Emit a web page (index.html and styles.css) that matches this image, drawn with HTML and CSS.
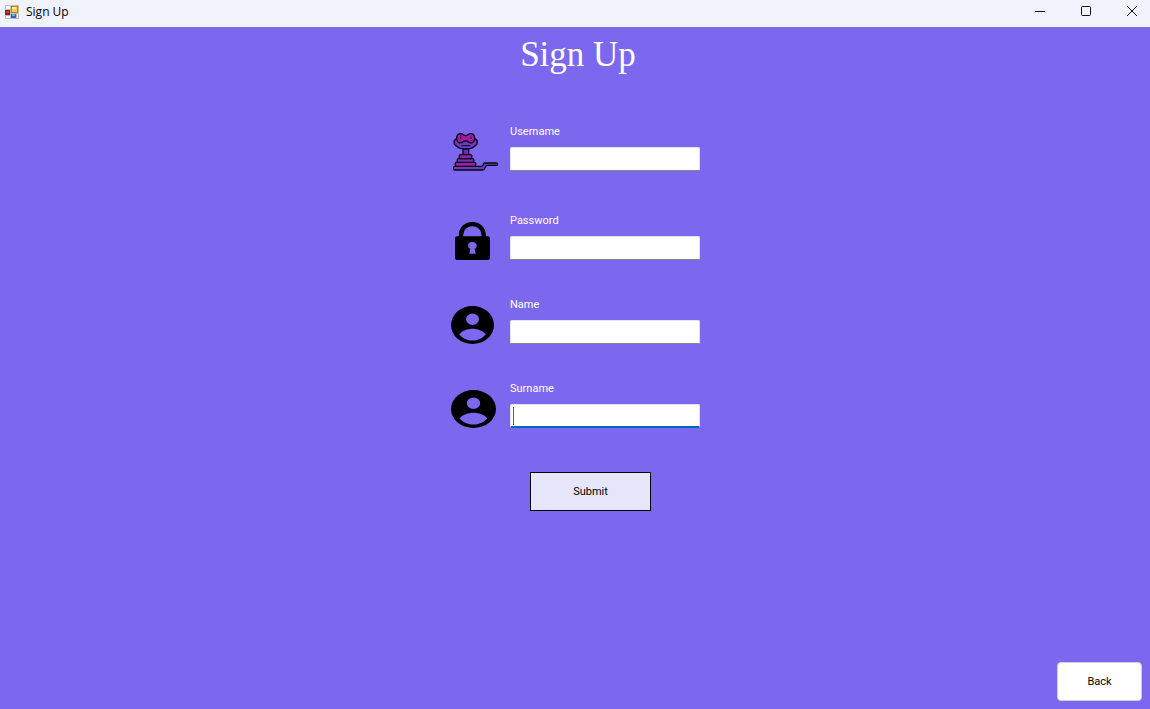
FILE: index.html
```html
<!DOCTYPE html>
<html lang="en">
<head>
<meta charset="utf-8">
<title>Sign Up</title>
<link rel="stylesheet" href="styles.css">
</head>
<body>
<header class="titlebar">
  <svg class="app-icon" viewBox="0 0 14 14" aria-hidden="true">
    <path fill="#bdbdbd" d="M0 0h14v14H0z"/>
    <path fill="#f4f4f4" d="M1 1h4v3H1zM1 11h4v2H1zM12 9h1v4h-1z"/>
    <path fill="#8f1d12" d="M0 5h5v5H0z"/><path fill="#d83a24" d="M1 6h3v2H1z"/>
    <path fill="#b8860b" d="M6 1h7v7H6z"/><path fill="#ffd23c" d="M7 2h5v5H7z"/><path fill="#fff0a0" d="M7 2h4v2H7z"/>
    <path fill="#2b66c4" d="M6 9h5v4H6z"/><path fill="#72aaf0" d="M7 9h3v2H7z"/>
  </svg>
  <span class="window-title">Sign Up</span>
  <div class="window-controls">
    <button type="button" aria-label="Minimize"><svg viewBox="0 0 12 12"><path d="M1 5.500h10"/></svg></button>
    <button type="button" aria-label="Maximize"><svg viewBox="0 0 12 12"><rect x="1.500" y=".5" width="9" height="9" rx="1"/></svg></button>
    <button type="button" aria-label="Close"><svg viewBox="0 0 12 12"><path d="M1 0l10 10M11 0L1 10"/></svg></button>
  </div>
</header>
<main class="page">
  <h1 class="heading">Sign Up</h1>
  <form class="form" id="signup">
    <div class="field">
      <svg class="icon snake" viewBox="24 26 135 114" aria-hidden="true">
        <g stroke="#080510" stroke-width="4" stroke-linejoin="round" stroke-linecap="round">
          <path fill="#5b35b4" d="M54 70h17v22H54z"/>
          <path fill="#6c3cc0" d="M34 44C28 46 26 52 28 58c2 5 6 6 10 10 10 8 38 8 48 0 4-4 8-5 10-10 2-6 0-12-6-14z"/>
          <path fill="#a01ca8" d="M37 33c4-6 13-6 18-2 4 3 10 3 14 0 6-4 14-4 18 2 4 8 2 19-5 22-7 2-12-2-16-5h-8c-4 3-9 7-16 5-7-3-9-14-5-22z"/>
          <path fill="#6c3cc0" d="M29 126h80c7 0 5-10 10-10h36c4 0 4 7 0 7h-29c-6 0-4 14-13 14H29c-5-2-5-9 0-11z"/>
          <path fill="#a01ca8" d="M35 114h53c6 0 6 12 0 12H35c-6 0-6-12 0-12z"/>
          <path fill="#6838ba" d="M40 103h43c5 0 5 11 0 11H40c-5 0-5-11 0-11z"/>
          <path fill="#a01ca8" d="M46 91h31c5 0 5 12 0 12H46c-5 0-5-12 0-12z"/>
        </g>
        <path fill="none" stroke="#080510" stroke-width="3" d="M49 64h27"/>
        <path fill="#3a0b48" d="M45 37h4v7h-4zM76 37h4v7h-4z"/>
      </svg>
      <div class="control"><label for="username">Username</label><input id="username" type="text"></div>
    </div>
    <div class="field">
      <svg class="icon lock" viewBox="0 0 105 114" aria-hidden="true">
        <path fill="none" stroke="#000" stroke-width="13" d="M18 48V40C18 -5 86 -5 86 40v8"/>
        <path fill-rule="evenodd" d="M8 43h90q7 0 7 7v57q0 7-7 7H8q-8 0-8-7V50q0-7 8-7zM52 60c-15 0-17 16-6 21l-3 14h19l-3-14c10-5 8-21-7-21z"/>
      </svg>
      <div class="control"><label for="password">Password</label><input id="password" type="password"></div>
    </div>
    <div class="field">
      <svg class="icon person" viewBox="2 2 20 20" preserveAspectRatio="none" aria-hidden="true"><path d="M12 2a10 10 0 1 0 0 20 10 10 0 0 0 0-20zm0 4a3 3 0 1 1 0 6 3 3 0 0 1 0-6zm0 14.200c-2.500 0-4.700-1.300-6.200-3.200 1.200-1.900 3.900-3 6.200-3s5 1.100 6.200 3c-1.500 1.900-3.700 3.200-6.200 3.200z"/></svg>
      <div class="control"><label for="name">Name</label><input id="name" type="text"></div>
    </div>
    <div class="field">
      <svg class="icon person wide" viewBox="2 2 20 20" preserveAspectRatio="none" aria-hidden="true"><path d="M12 2a10 10 0 1 0 0 20 10 10 0 0 0 0-20zm0 4a3 3 0 1 1 0 6 3 3 0 0 1 0-6zm0 14.200c-2.500 0-4.700-1.300-6.200-3.200 1.200-1.900 3.900-3 6.200-3s5 1.100 6.200 3c-1.500 1.900-3.700 3.200-6.200 3.200z"/></svg>
      <div class="control"><label for="surname">Surname</label><input class="active" id="surname" type="text"></div>
    </div>
    <button class="submit" type="submit">Submit</button>
  </form>
  <button class="back" type="button">Back</button>
</main>
</body>
</html>
```
FILE: styles.css
```css
* { box-sizing: border-box; }
body {
  margin: 0;
  min-height: 100vh;
  display: flex;
  flex-direction: column;
  background: #7b68ee;
  font: 11px/16px Roboto, "Liberation Sans", sans-serif;
}
button, input { font: inherit; }
.titlebar {
  display: flex;
  align-items: center;
  min-height: 27px;
  padding: 0 0 4px 5px;
  background: #f0f3fb;
  color: #000;
}
.app-icon { width: 14px; height: 14px; margin-right: 7px; }
.window-title { font: 12px/16px "Open Sans", sans-serif; }
.window-controls { display: flex; margin-left: auto; }
.window-controls button {
  display: grid;
  place-items: center;
  width: 46px;
  height: 22px;
  padding: 0 0 0 10px;
  border: 0;
  background: none;
}
.window-controls svg {
  width: 12px;
  height: 12px;
  fill: none;
  stroke: #111;
}
.page {
  flex: 1;
  display: flex;
  flex-direction: column;
  align-items: center;
  padding: 8px;
}
.heading {
  margin: 0 0 48px;
  padding-left: 6px;
  color: #fff;
  font: 35px/40px "Liberation Serif", serif;
}
.form {
  display: flex;
  flex-direction: column;
  gap: 36px;
  width: 250px;
  padding-left: 1px;
}
.field {
  display: grid;
  grid-template-columns: 47px 1fr;
  column-gap: 12px;
  align-items: end;
  min-height: 48px;
}
.field:first-child { margin-bottom: 5px; }
.icon { height: 38px; }
.snake { width: 45px; margin-left: 2px; }
.lock { width: 35px; margin-left: 4px; }
.person { width: 43px; }
.person.wide { width: 45px; }
.control {
  display: flex;
  flex-direction: column;
  gap: 7px;
  color: #fff;
}
.control input {
  width: 100%;
  height: 24px;
  padding: 2px 4px;
  border: 1px solid #e4e4ee;
  border-bottom-color: #858585;
  border-radius: 2px;
  background: #fff;
  outline: 0;
}
.control input.active {
  border-bottom: 2px solid #0067c0;
  border-radius: 2px 2px 0 0;
  background: linear-gradient(#938, #938) 2px 2px / 1px 18px no-repeat #fff;
}
.submit {
  width: 121px;
  height: 39px;
  margin: 8px 0 0 79px;
  border: 1px solid #000;
  background: #e6e6fa;
  color: #000;
}
.back {
  width: 85px;
  height: 39px;
  margin-top: auto;
  align-self: flex-end;
  border: 1px solid #d0d0d0;
  border-radius: 4px;
  background: #fff;
  color: #000;
}
```
